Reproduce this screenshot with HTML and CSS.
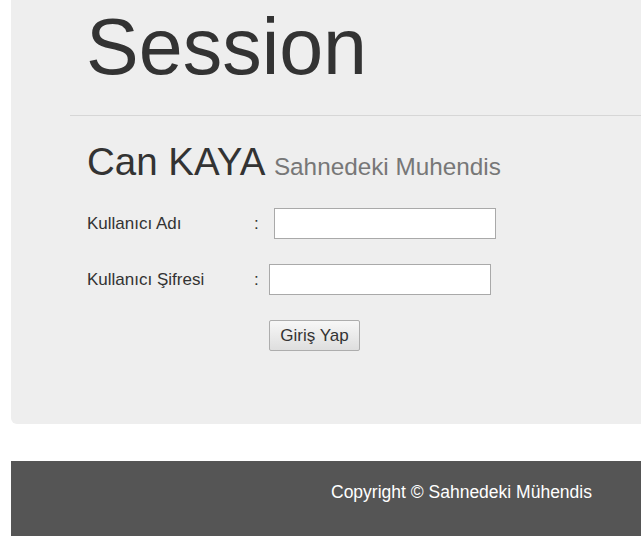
FILE: index.html
```html
<!DOCTYPE html>
<html lang="tr">
<head>
<meta charset="utf-8">
<title>Session</title>
<link rel="stylesheet" href="styles.css">
</head>
<body>
<div class="page">
  <div class="jumbotron">
    <h1 class="title">Session</h1>
    <hr class="divider">
    <h1 class="name">Can KAYA <small>Sahnedeki Muhendis</small></h1>
    <form class="login">
      <div class="row">
        <label class="label">Kullanıcı Adı</label>
        <span class="colon">:</span>
        <input class="field field-1" type="text">
      </div>
      <div class="row">
        <label class="label">Kullanıcı Şifresi</label>
        <span class="colon">:</span>
        <input class="field field-2" type="password">
      </div>
      <div class="row">
        <span class="label"></span>
        <span class="colon blank"></span>
        <button class="btn" type="button">Giriş Yap</button>
      </div>
    </form>
  </div>
  <footer class="footer">Copyright © Sahnedeki Mühendis</footer>
</div>
</body>
</html>
```
FILE: styles.css
```css
html, body {
  margin: 0;
  padding: 0;
  background: #fff;
}
body {
  font-family: "Liberation Sans", Arial, sans-serif;
  color: #333;
}
.page {
  padding-left: 11px;
}
.jumbotron {
  background: #eee;
  border-bottom-left-radius: 6px;
  padding: 3px 0 0 76px;
  height: 421px;
}
.title {
  margin: 0;
  font-size: 79px;
  font-weight: normal;
  line-height: 88px;
  color: #333;
  margin-left: -1px;
}
.divider {
  border: 0;
  border-top: 1px solid #d6d6d6;
  margin: 24px 0 0 -17px;
  height: 0;
}
.name {
  margin: 26px 0 0 0;
  font-size: 38.5px;
  font-weight: normal;
  line-height: 40px;
  color: #333;
}
.name small {
  font-size: 24.3px;
  color: #777;
}
.login {
  margin-top: 21px;
  display: flex;
  flex-direction: column;
  gap: 25px;
}
.row {
  display: flex;
  align-items: center;
  height: 31px;
}
.label {
  width: 167px;
  font-size: 17px;
  color: #333;
}
.colon {
  width: 6px;
  font-size: 17px;
  color: #333;
}
.field {
  box-sizing: border-box;
  width: 222px;
  height: 31px;
  border: 1px solid #a9a9a9;
  background: #fff;
  margin: 0;
  padding: 2px 4px;
}
.field-1 { margin-left: 14px; }
.field-2 { margin-left: 9px; }
.btn {
  box-sizing: border-box;
  margin-left: 9px;
  width: 91px;
  height: 31px;
  border: 1px solid #adadad;
  border-radius: 2px;
  background: linear-gradient(#f7f7f7, #dedede);
  font-family: "Liberation Sans", Arial, sans-serif;
  font-size: 17px;
  color: #333;
  padding: 0;
}
.footer {
  margin-top: 37px;
  height: 75px;
  background: #555;
  color: #fff;
  font-size: 17.5px;
  line-height: 63px;
  padding-left: 320px;
}
```
